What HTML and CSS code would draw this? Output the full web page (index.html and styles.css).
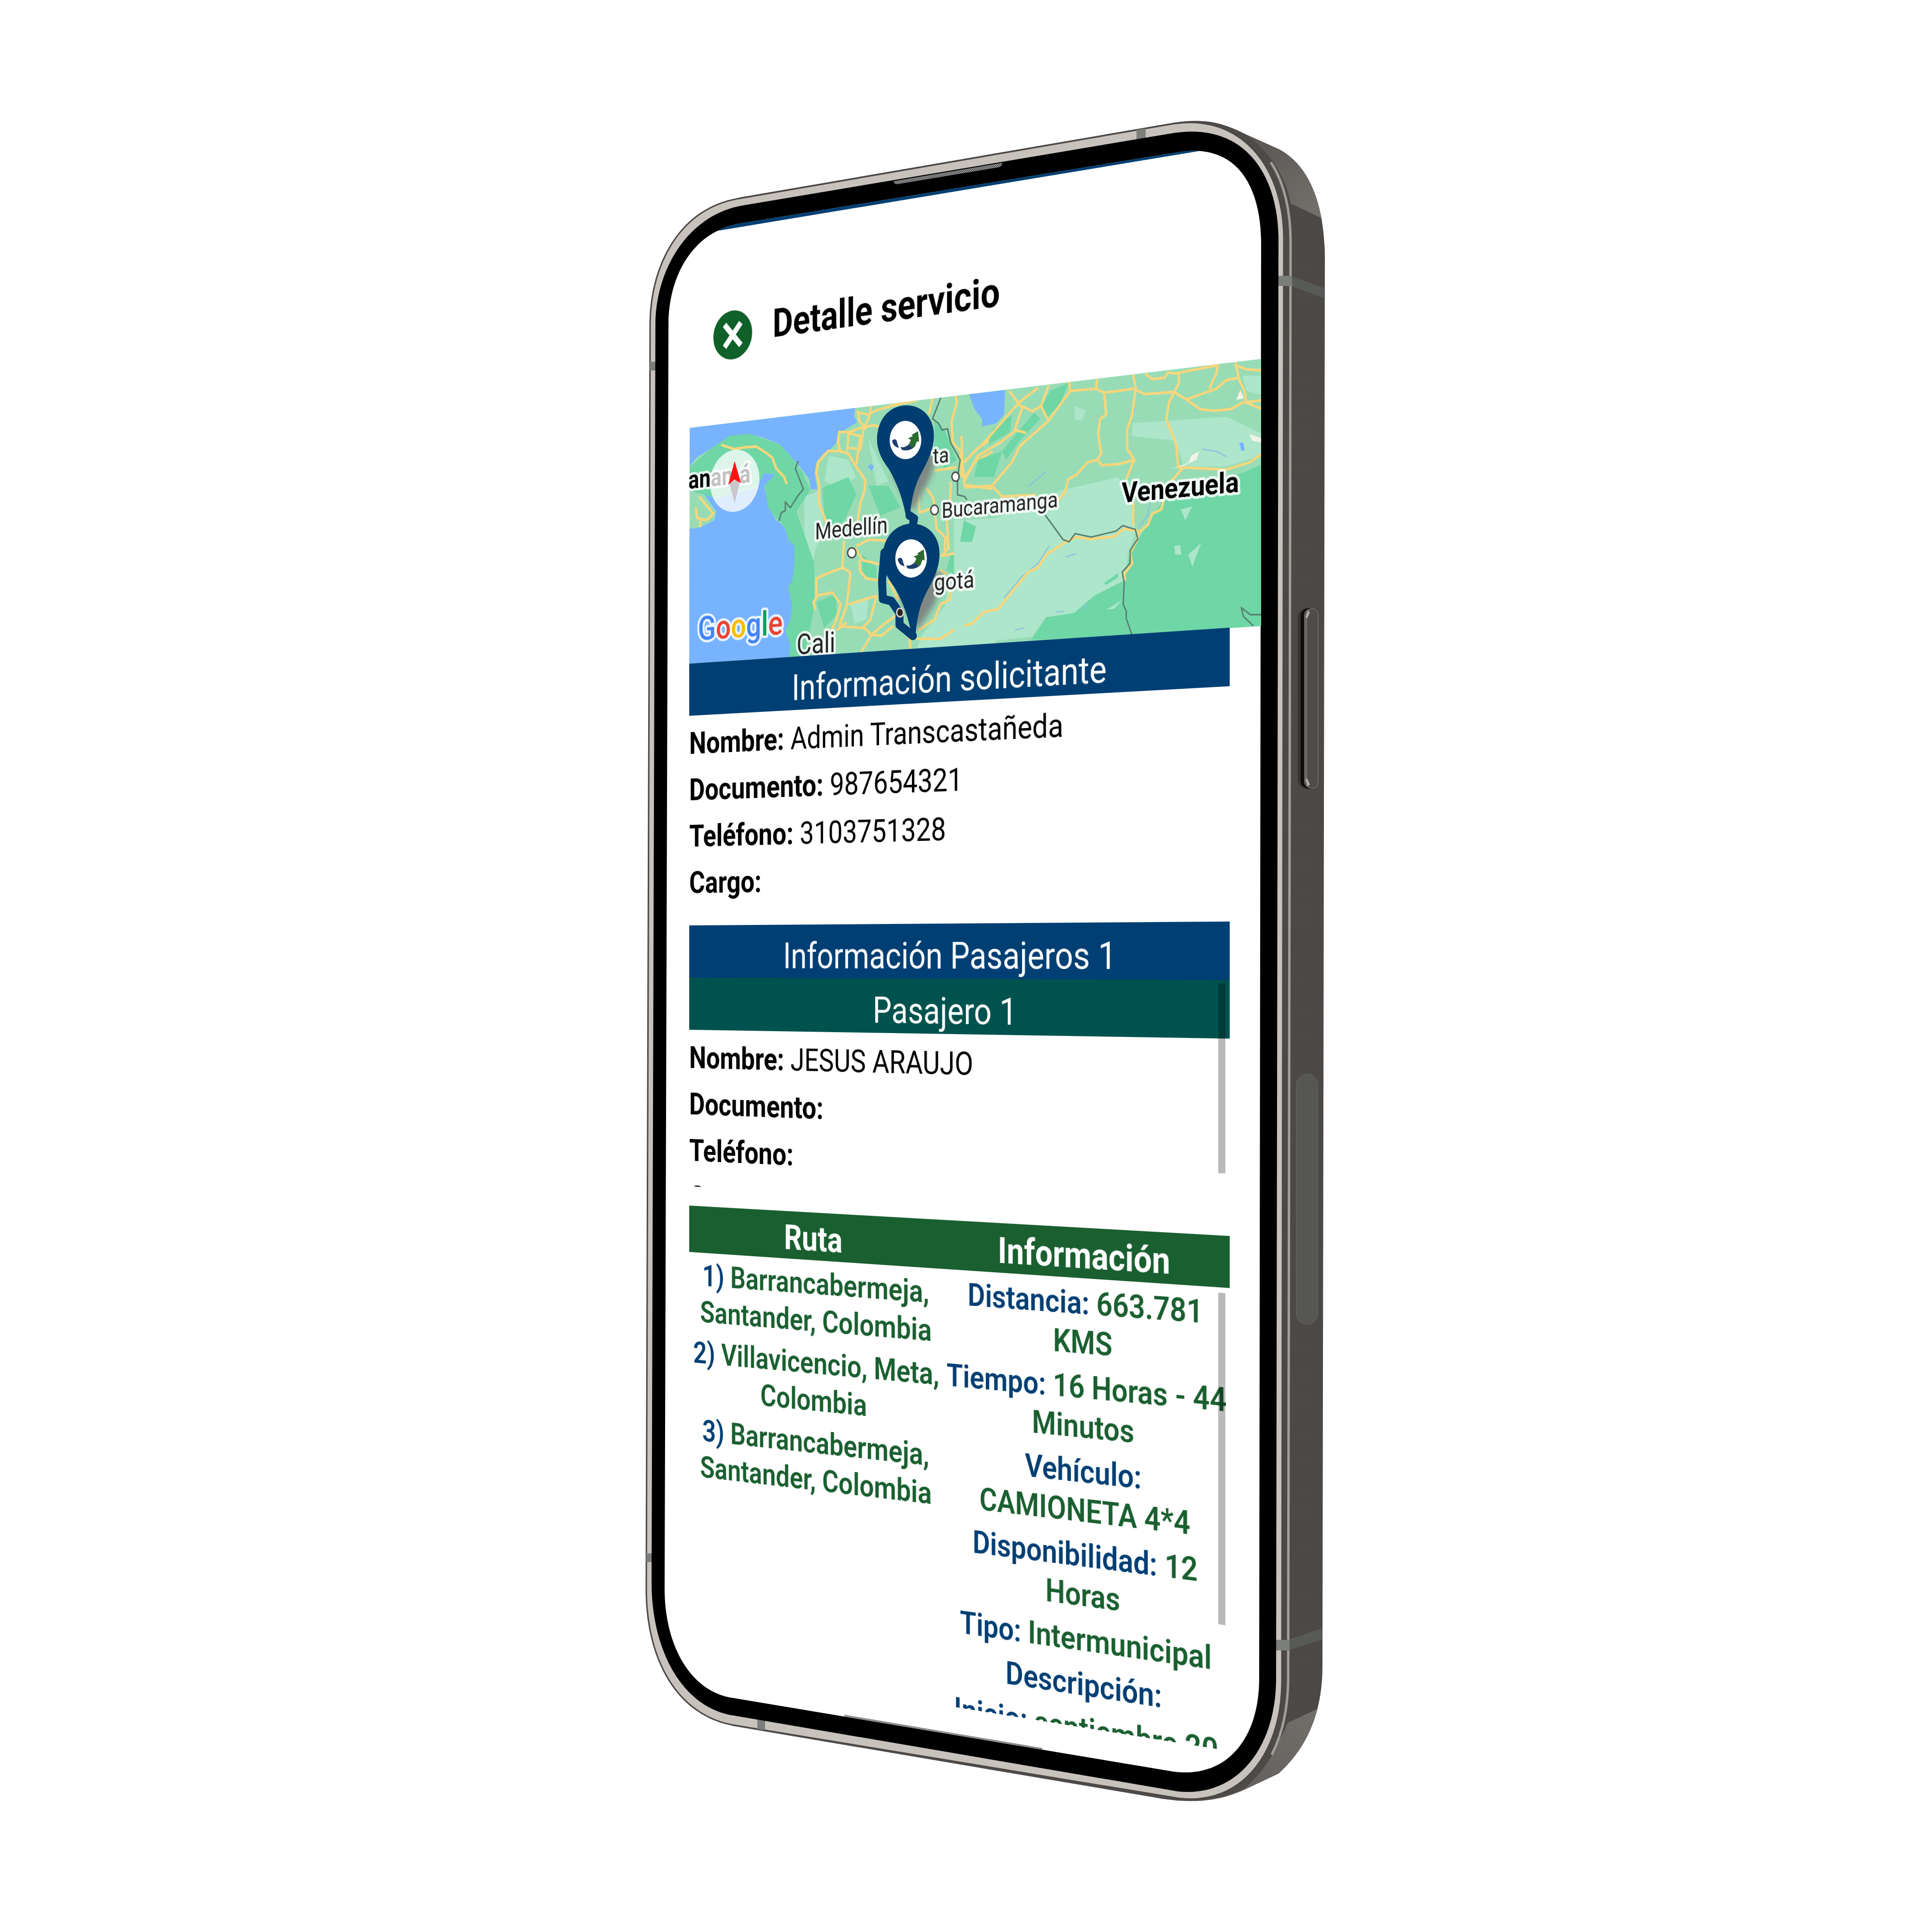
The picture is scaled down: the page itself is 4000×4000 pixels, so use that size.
FILE: index.html
```html
<!DOCTYPE html>
<html lang="es">
<head>
<meta charset="utf-8">
<meta name="viewport" content="width=device-width, initial-scale=1">
<title>Detalle servicio</title>
<link rel="stylesheet" href="styles.css">
</head>
<body>
<main class="page">
  <div class="device">
    <svg class="frame" viewBox="1240 230 1520 3540" aria-hidden="true">
      <defs>
        <linearGradient id="corner" x1="0" y1="0" x2="1" y2="1">
          <stop offset="0" stop-color="#4c4845"/>
          <stop offset="1" stop-color="#787470"/>
        </linearGradient>
        <linearGradient id="cornerLow" x1="0" y1="1" x2="1" y2="0">
          <stop offset="0" stop-color="#5f5a57"/>
          <stop offset="1" stop-color="#74716d"/>
        </linearGradient>
        <linearGradient id="side" x1="0" y1="0" x2="1" y2="0">
          <stop offset="0" stop-color="#524f4d"/>
          <stop offset="1" stop-color="#4b4846"/>
        </linearGradient>
        <pattern id="mesh" width="4" height="4" patternUnits="userSpaceOnUse">
          <rect width="4" height="4" fill="#4c4c4e"/>
          <rect width="2" height="2" fill="#a0a0a2"/>
          <rect x="2" y="2" width="2" height="2" fill="#a0a0a2"/>
        </pattern>
        <clipPath id="body"><path d="M1530 409L2430 254C2500 243 2540 258 2581 279L2648 309C2715 345 2742 430 2743 530L2738 3450C2738 3540 2710 3615 2647 3672L2577 3705C2530 3726 2480 3736 2400 3723L1515 3573Z"/></clipPath>
        <clipPath id="glass"><path d="M1384 666C1386 575 1430 482 1530 463L2440 315C2560 295 2610 385 2611 500L2607 3478C2606 3600 2540 3682 2430 3668L1515 3515C1425 3500 1376 3400 1376 3290Z"/></clipPath>
        <clipPath id="mapArea"><path d="M1428 886L2611 743V1296L1427 1374Z"/></clipPath>
        <filter id="soft" x="-50%" y="-50%" width="200%" height="200%"><feGaussianBlur stdDeviation="14"/></filter>
        <g id="pin">
          <path fill="#003d70" d="M1146 775C1128 690 1100 620 1060 560C1020 510 1003 470 1003 425C1003 333 1065 267 1150 267C1235 267 1287 330 1287 405C1287 470 1260 520 1225 580C1190 640 1175 700 1168 775Z"/>
          <ellipse cx="1145" cy="428" rx="79" ry="89" fill="#fff"/>
          <path fill="#1d3f70" d="M1078 432C1088 420 1102 422 1104 442L1112 464C1094 462 1082 450 1078 432ZM1119 460C1145 466 1160 450 1172 436L1196 452C1182 474 1150 480 1128 474Z"/>
          <path fill="#2c6a2e" d="M1162 448L1172 428L1158 420L1182 410L1176 404L1208 387L1213 437L1202 434C1198 448 1190 458 1180 464Z"/>
        </g>
      </defs>

      <g clip-path="url(#body)">
        <path fill="url(#side)" d="M1300 230H2760V3760H1300Z"/>
        <path fill="url(#corner)" d="M2480 230H2760V463L2672 421C2660 360 2610 290 2540 255Z"/>
        <path fill="url(#cornerLow)" d="M2760 3523L2666 3567C2640 3630 2590 3690 2500 3728V3760H2760Z"/>
        <path fill="#4d4a48" d="M2500 230L2533 259C2610 280 2665 360 2674 430V600H2500ZM2669 3480C2669 3560 2650 3640 2577 3702C2520 3733 2450 3731 2400 3724V3480Z"/>
        <path fill="#585a57" d="M2672 571L2743 597V618L2672 592ZM2667 3395L2740 3370V3393L2667 3417Z"/>
      </g>
      <path fill="none" stroke="#a39f9b" stroke-width="5" d="M2631 336C2660 380 2672 440 2672 500L2667 3480C2666 3540 2655 3590 2633 3633"/>

      <path fill="#c8c2bd" stroke="#4a4745" stroke-width="3" d="M1346 666C1348 545 1410 430 1530 411L2430 256C2570 235 2656 345 2658 490L2654 3486C2652 3630 2570 3740 2439 3723L1515 3571C1405 3550 1338 3440 1338 3290Z"/>
      <path fill="#7c7e7c" d="M1345 749H1358V767H1345ZM2353 269L2372 266V288L2353 291ZM2646 571H2675V592H2646ZM1338 3216H1350V3234H1338ZM1568 3558L1584 3561V3582L1568 3580ZM2641 3395H2670V3417H2641Z"/>
      <path fill="#000" d="M1357 666C1360 550 1430 442 1540 425L2420 277C2575 248 2645 360 2647 490L2642 3478C2641 3620 2560 3722 2439 3709L1520 3552C1415 3537 1349 3420 1349 3276Z"/>
      <path fill="url(#mesh)" d="M1850 375L2075 337C2075 343 2072 346 2064 347L1860 381C1853 382 1851 380 1850 375Z"/>

      <g clip-path="url(#glass)">
        <path fill="#fff" d="M1300 230H2700V3760H1300Z"/>
        <path fill="#003f73" d="M1370 480L2620 272V290L1370 497Z"/>
        <path fill="#8c8c8c" d="M1748 3550L2158 3619V3628L1750 3560Z"/>
      </g>

      <rect x="2687" y="1260" width="38" height="372" rx="18" fill="#353231"/>
      <rect x="2693" y="1259" width="34" height="374" rx="17" fill="#0d0c0b"/>
      <rect x="2700" y="1260" width="29" height="372" rx="14" fill="#666361"/>
      <rect x="2705" y="1260" width="24" height="372" rx="12" fill="#4f4c4a" stroke="#8a8784"/>
      <path fill="#b5b2ae" d="M2703 1278L2708 1264L2712 1268L2706 1281ZM2703 1614L2708 1628L2712 1624L2706 1611Z"/>
      <rect x="2684" y="2224" width="44" height="518" rx="22" fill="#565754" stroke="#6d6a67"/>

      <g clip-path="url(#mapArea)">
        <path fill="#98dcb6" d="M1400 720H2640V1400H1400Z"/>
        <g transform="translate(1400 720) scale(.41458 .44643)">
          <g class="land-light">
            <path d="M640 690L720 660L740 860L700 920L680 1000L640 900ZM760 500L860 520L900 600L820 650L740 620ZM1380 960L1600 900V1420H1190L1230 1330L1340 1200ZM870 1180L960 1160L950 1260L890 1280ZM960 420L1010 520L1060 620L1000 640Z"/>
          </g>
          <g class="land-dark">
            <path d="M440 560L620 560L670 660L600 760L690 1000L690 1200L640 1440H540L560 1110L590 1000L540 830L450 740ZM60 560L170 470L270 405L370 400L520 450L580 510L640 590L560 680L440 590L400 640L200 700L60 660ZM730 650L860 600L900 680L840 800L780 860L740 780ZM1290 330L1340 380L1400 520L1340 560L1290 470ZM1440 820L1500 800L1490 880L1400 920ZM960 640L1060 640L1120 740L1020 780ZM1370 960L1450 950L1400 1060L1350 1030ZM930 960L1000 1020L1000 1080L930 1050ZM700 1180L800 1140L800 1240L740 1300Z"/>
          </g>
          <g class="water">
            <path d="M50 365L895 270L888 320L905 345L850 375L805 400L800 440L770 470L735 490L700 530L692 580L704 655L672 657L665 610L620 555L560 490L520 450L430 415L360 400L270 407L170 470L100 510L60 560Z"/>
            <path d="M50 842L120 832L190 800L200 760L140 680L200 700L400 650L440 582L495 588L440 640L460 740L500 800L540 830L560 890L590 920L590 1000L580 1080L558 1110L580 1200L570 1260L545 1310L570 1380L560 1450L50 1475Z"/>
            <path d="M958 550L972 538L988 550L975 572Z"/>
          </g>
          <g class="road">
            <path d="M225 450L290 470L340 462L400 458L450 488L480 510L500 560L540 600L552 632M115 690L185 770L150 800L105 790L98 740M120 800V832"/>
            <path d="M905 290L915 340L940 365L860 392L815 390L808 440L820 480L760 478L710 530L700 580L715 640L710 710L750 810M860 392L855 480M860 395L920 410L900 540M820 480L860 490L890 540L945 615L940 665L920 720L905 810M975 265L960 330L935 380L920 470L865 465M905 300L960 310L1000 290L1090 265L1200 245M935 380C960 355 990 355 1030 372"/>
            <path d="M838 895L830 1020L745 1050L700 1070V1160L685 1180L695 1215M700 1150L780 1135L822 1190L800 1260L775 1315M830 1020L870 1042L862 1120L850 1200L815 1290L870 1295L940 1300L975 1332L1025 1335L1085 1290M860 1190L1000 1150L970 1260L930 1300M900 920L960 890L1050 895M895 930L930 985L1020 1005M915 985L918 1035L950 1070L1020 1080M1100 1240L1040 1280L975 1332L925 1410M800 1310L850 1275M1060 1080L1110 1170"/>
            <path d="M1280 235L1262 310M1395 215L1402 255L1375 340L1382 440L1420 480L1425 600M1210 680L1215 765L1275 745M1250 650L1285 700L1300 840L1345 880L1340 940M1425 410L1430 540L1440 635L1580 655M1440 530L1500 470L1580 420M1440 605L1490 530L1580 480M1372 620L1368 720M1352 800L1360 930L1325 965L1400 952L1520 920L1480 1020M1320 1030L1350 1050M1210 1310L1290 1260L1320 1190L1362 1170L1372 1120M1200 1350H1320L1400 1300L1480 1280L1580 1215M1165 1340L1170 1410M1290 570L1400 555"/>
          </g>
          <g class="border">
            <path d="M1322 230L1280 330L1310 350L1328 382L1355 375L1370 440L1418 520L1405 600V682L1440 690L1452 705M610 525L595 560L635 655L605 690L570 742L545 715V755L525 765L513 803"/>
          </g>
        </g>
        <g transform="translate(2000 720) scale(.41458 .44643)">
          <g class="land-light">
            <path d="M-60 800L150 790L480 660L760 600L820 700L850 850L810 950L790 1100L560 1230L400 1250L330 1340L-60 1380ZM830 350L1300 320L1480 400V500L1300 550L1090 552L1040 430L830 410ZM540 270L600 290L580 340L545 330ZM1380 130H1480V220L1400 200Z"/>
          </g>
          <g class="land-dark">
            <path d="M325 1355L400 1250L540 1230L640 1150L790 1080L820 950L900 830L960 740L1000 690L1380 580L1480 540V1310ZM420 200L510 165L470 260L400 330L380 270ZM250 400L340 300L370 330L270 430L200 520L180 480ZM60 520L180 480L140 600L40 600ZM130 380L230 310L220 390L110 450ZM-10 800L50 830L30 900L-30 900ZM690 1090L760 1045V1065L700 1100Z"/>
          </g>
          <g class="land-light">
            <path d="M1072 750L1130 735L1095 800ZM1040 920L1070 915L1075 960L1045 960ZM1110 960L1175 905L1130 1015ZM700 1215L780 1170L740 1210Z"/>
          </g>
          <g class="water">
            <path d="M15 215L195 195L190 310L150 350L80 365V330L40 280ZM1365 440L1385 440L1392 475L1375 478ZM830 280H842V298H830Z"/>
          </g>
          <path fill="#f1f3e6" d="M1370 195L1388 235L1350 242ZM1110 535L1125 500L1165 480L1150 520L1080 550L1025 560ZM1415 400L1475 420V440L1430 432Z"/>
          <path class="river" d="M920 720L905 780L865 832M1180 470L1250 480L1300 505M190 1160L280 1060L360 1000L415 920M245 1310L290 1298M450 1225L490 1222M585 1220L605 1185M500 970L550 955M310 645L400 575"/>
          <g class="road">
            <path d="M-10 530L100 430L230 290L270 250L360 185M215 200L265 260L280 280L240 390L170 440L60 500L-10 620M280 270L330 295L375 270L412 175M375 270L410 335M240 380L300 395M-10 648L130 640L230 530L270 455L410 340L450 290L520 200L650 190L690 208L760 200L840 190L890 215L1040 205L1100 240L1170 285L1240 292L1320 285L1380 255L1480 243M655 145L650 190M515 155L520 200M130 640L180 690L350 682"/>
            <path d="M835 125L848 190L830 310L805 380V470L845 525M690 205L700 310L670 330L660 400L675 490L655 520L610 530L550 590L510 610L495 670L455 712M655 520L680 545L760 540L840 520L800 610M835 715V825M895 120L930 145L990 140L1010 115L1060 120L1065 160L1040 205L1015 250L1000 330L1030 400L1050 450L1060 555L1080 560L1025 620M1080 555L1300 565L1420 530L1480 490M1040 120L1250 82M1258 75L1250 120L1215 190M1100 240L1250 190L1300 150L1360 140M1345 65L1365 150L1390 200L1400 255L1480 285M1345 80L1400 100L1480 105"/>
            <path d="M990 700L975 750L930 770L910 820L865 855L850 900L820 950L830 1000L790 1050L795 1080M860 850L790 840L740 875L620 888L550 878L500 900L400 960L360 1020L310 1040L240 1120L160 1212L90 1225L30 1280L-10 1288"/>
          </g>
          <g class="border">
            <path d="M395 775L485 890L515 900L545 862L625 878L750 850L782 825L845 842L858 885L820 940V1000L780 1040L790 1090L785 1190L800 1220V1255L830 1335M1480 1238H1420L1375 1205L1385 1245L1435 1290"/>
          </g>
        </g>
        <g transform="translate(1400 720) scale(.41458 .44643)">
          <g class="city">
            <ellipse cx="877" cy="951" rx="21" ry="23"/>
            <ellipse cx="1395" cy="598" rx="18" ry="21"/>
            <ellipse cx="1290" cy="752" rx="19" ry="22"/>
          </g>
          <g fill="#7d7f7f" opacity=".9" filter="url(#soft)">
            <path d="M1300 500L1270 600L1180 760L1080 590L1200 480Z"/>
            <path d="M1340 1050L1290 1190L1205 1310L1110 1150L1230 1030Z"/>
          </g>
          <path class="route" d="M1165 778L1188 792L1180 830M1040 950L1028 1080L1032 1165L1075 1175L1115 1230L1115 1285L1182 1336"/>
          <use href="#pin"/>
          <use href="#pin" x="28" y="549"/>
          <ellipse cx="1118" cy="1228" rx="17" ry="20" fill="#2a2320" stroke="#d8d0cc" stroke-width="7"/>
        </g>
      </g>
    </svg>

    <div class="screen">
      <header class="topbar">
        <button class="close" type="button" aria-label="Cerrar">
          <svg viewBox="0 0 100 100" aria-hidden="true"><path d="M29 27L71 73M71 27L29 73"/></svg>
        </button>
        <h1 class="title">Detalle servicio</h1>
      </header>

      <svg class="labels" viewBox="0 0 1046 384" role="img" aria-label="Mapa de la ruta">
        <text class="country" x="-2" y="99">anamá</text>
        <circle class="compass" cx="93" cy="94" r="50"/>
        <path fill="#ff1414" d="M93 62L106 99L93 92L80 99Z"/>
        <path fill="#c9c6cc" d="M93 130L103 99L93 93L83 99Z"/>
        <text class="town" x="478" y="101">ta</text>
        <text class="town wide" x="253" y="201">Medellín</text>
        <text class="town" x="494" y="186">Bucaramanga</text>
        <text class="town wide" x="480" y="297">gotá</text>
        <text class="town big" x="217" y="381">Cali</text>
        <text class="country" x="815" y="188">Venezuela</text>
        <text class="brand" x="18" y="347"><tspan fill="#4285f4">G</tspan><tspan fill="#ea4335">o</tspan><tspan fill="#fbbc05">o</tspan><tspan fill="#4285f4">g</tspan><tspan fill="#0f9d58">l</tspan><tspan fill="#ea4335">e</tspan></text>
      </svg>

      <div class="content">
        <section>
          <h2 class="bar">Información solicitante</h2>
          <ul class="info">
            <li><b>Nombre:</b> Admin Transcastañeda</li>
            <li><b>Documento:</b> 987654321</li>
            <li><b>Teléfono:</b> 3103751328</li>
            <li><b>Cargo:</b></li>
          </ul>
        </section>

        <section>
          <h2 class="bar">Información Pasajeros 1</h2>
          <div class="scroller passengers">
            <h3 class="bar teal">Pasajero 1</h3>
            <ul class="info">
              <li><b>Nombre:</b> JESUS ARAUJO</li>
              <li><b>Documento:</b></li>
              <li><b>Teléfono:</b></li>
              <li><b>Cargo:</b></li>
            </ul>
            <span class="thumb"></span>
          </div>
        </section>

        <section class="scroller trip">
          <table class="detail">
            <thead>
              <tr><th>Ruta</th><th>Información</th></tr>
            </thead>
            <tbody>
              <tr>
                <td>
                  <p><b>1)</b> Barrancabermeja, Santander, Colombia</p>
                  <p><b>2)</b> Villavicencio, Meta, Colombia</p>
                  <p><b>3)</b> Barrancabermeja, Santander, Colombia</p>
                </td>
                <td>
                  <p><b>Distancia:</b> 663.781 KMS</p>
                  <p><b>Tiempo:</b> 16 Horas - 44 Minutos</p>
                  <p><b>Vehículo:</b><br>CAMIONETA 4*4</p>
                  <p><b>Disponibilidad:</b> 12 Horas</p>
                  <p><b>Tipo:</b> Intermunicipal</p>
                  <p><b>Descripción:</b></p>
                  <p><b>Inicio:</b> septiembre 20</p>
                </td>
              </tr>
            </tbody>
          </table>
          <span class="thumb"></span>
        </section>
      </div>
    </div>
  </div>
</main>
</body>
</html>
```
FILE: styles.css
```css
* {
  box-sizing: border-box;
}

body {
  margin: 0;
  background: #fff;
  color: #000;
  font-family: Roboto, "Liberation Sans", sans-serif;
}

h1, h2, h3, p, ul {
  margin: 0;
  padding: 0;
  list-style: none;
}

.page {
  display: grid;
  place-items: center;
  min-height: 100vh;
}

/* Phone artwork and tilted screen share one grid cell */
.device {
  display: grid;
  width: 1520px;
}

.device > * {
  grid-area: 1 / 1;
}

.frame {
  width: 100%;
  height: auto;
}

.screen {
  width: 1389px;
  margin: 258px 0 0 126px;
  transform-origin: 61px 1494px;
  transform: perspective(7135px) rotateY(-38deg);
}

/* Map artwork */
.land-light { fill: #ade6ca; }
.land-dark { fill: #6fd6a6; }
.water { fill: #78b3ff; }

.road, .border, .river, .route {
  fill: none;
  stroke-linejoin: round;
}

.road { stroke: #f7d67c; stroke-width: 12; }
.border { stroke: #5a7f70; stroke-width: 7; }
.river { stroke: #86bfe6; stroke-width: 5; }
.route { stroke: #003d70; stroke-width: 40; stroke-linecap: round; }
.city { fill: #fff; stroke: #4d4d4d; stroke-width: 7; }

/* Header */
.topbar {
  display: flex;
  align-items: center;
  gap: 52px;
  height: 398px;
  padding: 38px 61px 0 124px;
}

.close {
  width: 100px;
  height: 100px;
  padding: 0;
  border: 0;
  border-radius: 50%;
  background: #0f6029;
}

.close svg {
  display: block;
  width: 100%;
}

.close path {
  stroke: #fff;
  stroke-width: 12;
}

.title {
  padding-bottom: 22px;
  font-size: 79px;
  font-weight: 700;
  line-height: 92px;
}

.labels {
  display: block;
  width: 1328px;
  height: 488px;
  margin-left: 61px;
}

.labels text {
  stroke: #fff;
  stroke-opacity: .85;
  stroke-width: 8px;
  stroke-linejoin: round;
  paint-order: stroke;
}

.labels .country { fill: #000; font-size: 42px; font-weight: 700; }
.labels .town { fill: #222; font-size: 34px; }
.labels .town.wide { font-size: 37px; }
.labels .town.big { font-size: 45px; }
.labels .brand { font-size: 54px; font-weight: 500; }
.compass { fill: #fff; fill-opacity: .76; }

/* Sections */
.content {
  display: flex;
  flex-direction: column;
  gap: 40px;
  padding: 0 63px 0 61px;
}

.bar {
  height: 108px;
  padding-top: 18px;
  background: #003f73;
  color: #fff;
  font-size: 72px;
  font-weight: 400;
  line-height: 92px;
  text-align: center;
}

.teal {
  background: #00524f;
}

.info {
  padding-top: 10px;
}

.info li {
  height: 96px;
  font-size: 63px;
  line-height: 96px;
}

.scroller {
  position: relative;
  overflow: hidden;
}

.passengers { height: 432px; }
.trip { height: 950px; }

.thumb {
  position: absolute;
  right: 9px;
  width: 15px;
  background: rgba(0, 0, 0, .27);
}

.passengers .thumb { top: 6px; height: 351px; }
.trip .thumb { top: 106px; height: 613px; }

.detail {
  width: 100%;
  border-collapse: collapse;
  table-layout: fixed;
}

.detail th {
  height: 96px;
  padding: 10px 0 0;
  background: #1a5f30;
  color: #fff;
  font-size: 70px;
  font-weight: 700;
  line-height: 86px;
}

.detail td {
  padding: 9px 0 0;
  color: #1a5f30;
  font-size: 62px;
  font-weight: 600;
  line-height: 75px;
  text-align: center;
  vertical-align: top;
}

.detail p {
  margin-bottom: 10px;
}

.detail b {
  color: #003f73;
  font-weight: 600;
}
```
